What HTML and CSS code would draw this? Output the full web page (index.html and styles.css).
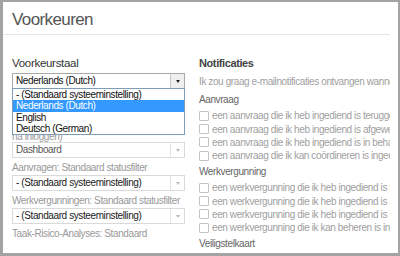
FILE: index.html
```html
<!DOCTYPE html>
<html lang="nl">
<head>
    <meta charset="UTF-8">
    <title>Voorkeuren</title>
    <link rel="stylesheet" href="styles.css">
</head>
<body>

<div class="window">
    <h1 class="title">Voorkeuren</h1>

    <div class="content">
        <!-- Left column: general preferences -->
        <div class="col-left">
            <h2 class="field-title">Voorkeurstaal</h2>
            <div class="select-wrap">
                <div class="select">
                    <span class="select-text">Nederlands (Dutch)</span>
                    <span class="select-btn"><span class="caret"></span></span>
                </div>
                <ul class="dropdown">
                    <li>- (Standaard systeeminstelling)</li>
                    <li class="active">Nederlands (Dutch)</li>
                    <li>English</li>
                    <li>Deutsch (German)</li>
                </ul>
            </div>
            <p class="hint">De taal wordt gebruikt voor alle<br>schermen en e-mails</p>

            <div class="label">Startpagina (de pagina die u ziet<br>na inloggen)</div>
            <div class="select muted">
                <span class="select-text">Dashboard</span>
                <span class="select-btn"><span class="caret"></span></span>
            </div>

            <div class="label">Aanvragen: Standaard statusfilter</div>
            <div class="select light">
                <span class="select-text">- (Standaard systeeminstelling)</span>
                <span class="select-btn"><span class="caret"></span></span>
            </div>

            <div class="label">Werkvergunningen: Standaard statusfilter</div>
            <div class="select light">
                <span class="select-text">- (Standaard systeeminstelling)</span>
                <span class="select-btn"><span class="caret"></span></span>
            </div>

            <div class="label">Taak-Risico-Analyses: Standaard</div>
        </div>

        <!-- Right column: notifications -->
        <div class="col-right">
            <h2 class="section-title">Notificaties</h2>
            <p class="intro">Ik zou graag e-mailnotificaties ontvangen wanneer</p>

            <h3 class="group-title">Aanvraag</h3>
            <label class="check"><span class="box"></span>een aanvraag die ik heb ingediend is teruggestuurd</label>
            <label class="check"><span class="box"></span>een aanvraag die ik heb ingediend is afgewezen</label>
            <label class="check"><span class="box"></span>een aanvraag die ik heb ingediend is in behandeling</label>
            <label class="check"><span class="box"></span>een aanvraag die ik kan coördineren is ingediend</label>

            <h3 class="group-title">Werkvergunning</h3>
            <label class="check"><span class="box"></span>een werkvergunning die ik heb ingediend is teruggestuurd</label>
            <label class="check"><span class="box"></span>een werkvergunning die ik heb ingediend is afgewezen</label>
            <label class="check"><span class="box"></span>een werkvergunning die ik heb ingediend is in behandeling</label>
            <label class="check"><span class="box"></span>een werkvergunning die ik kan beheren is ingediend</label>

            <h3 class="group-title">Veiligstelkaart</h3>
            <label class="check"><span class="box"></span>een veiligstelkaart die ik heb ingediend is goedgekeurd</label>
        </div>
    </div>
</div>

</body>
</html>
```

FILE: styles.css
```css
body {
    margin: 0;
    font-family: "Liberation Sans", Arial, sans-serif;
    background: #fff;
}
.window {
    width: 400px;
    height: 256px;
    box-sizing: border-box;
    border-style: solid;
    border-color: #a3a3a3;
    border-width: 2px 2px 3px 3px;
    overflow: hidden;
    background: #fff;
}
.title {
    margin: 0 8px 0 0;
    padding: 8px 0 4px 9px;
    font-size: 17px;
    line-height: 20px;
    letter-spacing: -0.6px;
    font-weight: normal;
    color: #555;
    border-bottom: 1px solid #e6e6e6;
}
.content {
    display: flex;
    padding: 21px 8px 0 9px;
    overflow: hidden;
    font-size: 10px;
    letter-spacing: -0.4px;
}
.col-left {
    width: 173px;
    flex: none;
}
.col-right {
    flex: 1;
    min-width: 0;
    margin-left: 14px;
    overflow: hidden;
    white-space: nowrap;
}
.field-title {
    margin: 0 0 3px;
    font-size: 11.5px;
    line-height: 14px;
    letter-spacing: -0.3px;
    font-weight: normal;
    color: #333;
}
.select-wrap {
    position: relative;
}
.select {
    display: flex;
    height: 16px;
    box-sizing: border-box;
    border: 1px solid #a9a9a9;
    background: #fff;
    color: #111;
}
.select-text {
    flex: 1;
    padding: 0 3px;
    line-height: 14px;
    white-space: nowrap;
    overflow: hidden;
}
.select-btn {
    width: 13px;
    border-left: 1px solid #c8c8c8;
    background: #efefef;
    display: flex;
    align-items: center;
    justify-content: center;
}
.caret {
    width: 0;
    height: 0;
    border-left: 2.5px solid transparent;
    border-right: 2.5px solid transparent;
    border-top: 3px solid #222;
}
.select.muted,
.select.light {
    border-color: #dadada;
}
.select.muted .select-text {
    color: #555;
}
.select.light .select-text {
    color: #222;
}
.select.muted .select-btn,
.select.light .select-btn {
    background: #fff;
    border-left-color: #e4e4e4;
}
.select.muted .caret,
.select.light .caret {
    border-top-color: #bbb;
}
.dropdown {
    position: absolute;
    top: 15px;
    left: 0;
    right: 0;
    margin: 0;
    padding: 0;
    list-style: none;
    background: #fff;
    border: 1px solid #7f9db9;
    color: #111;
    z-index: 2;
}
.dropdown li {
    padding: 0 3px;
    line-height: 11.25px;
    white-space: nowrap;
}
.dropdown li.active {
    background: #3399ff;
    color: #fff;
}
.hint {
    margin: 6px 0 0;
    line-height: 10px;
    color: #999;
}
.label {
    margin: 5px 0 2px;
    line-height: 10px;
    color: #999;
    white-space: nowrap;
}
.hint + .label {
    margin-top: 7px;
    margin-bottom: 0;
}
.section-title {
    margin: 0 0 6px;
    font-size: 11px;
    line-height: 14px;
    font-weight: bold;
    color: #444;
}
.intro {
    margin: 0 0 6px;
    line-height: 12px;
    color: #a0a0a0;
}
.group-title {
    margin: 0 0 3.25px;
    font-size: 10px;
    line-height: 12px;
    font-weight: normal;
    color: #666;
}
.check {
    display: flex;
    align-items: center;
    height: 13.3px;
    color: #a0a0a0;
}
.check + .group-title {
    margin-top: 3.5px;
}
.box {
    width: 8px;
    height: 8px;
    flex: none;
    margin-right: 3px;
    border: 1px solid #c4c4c4;
    border-radius: 1px;
    background: #fff;
}
```
